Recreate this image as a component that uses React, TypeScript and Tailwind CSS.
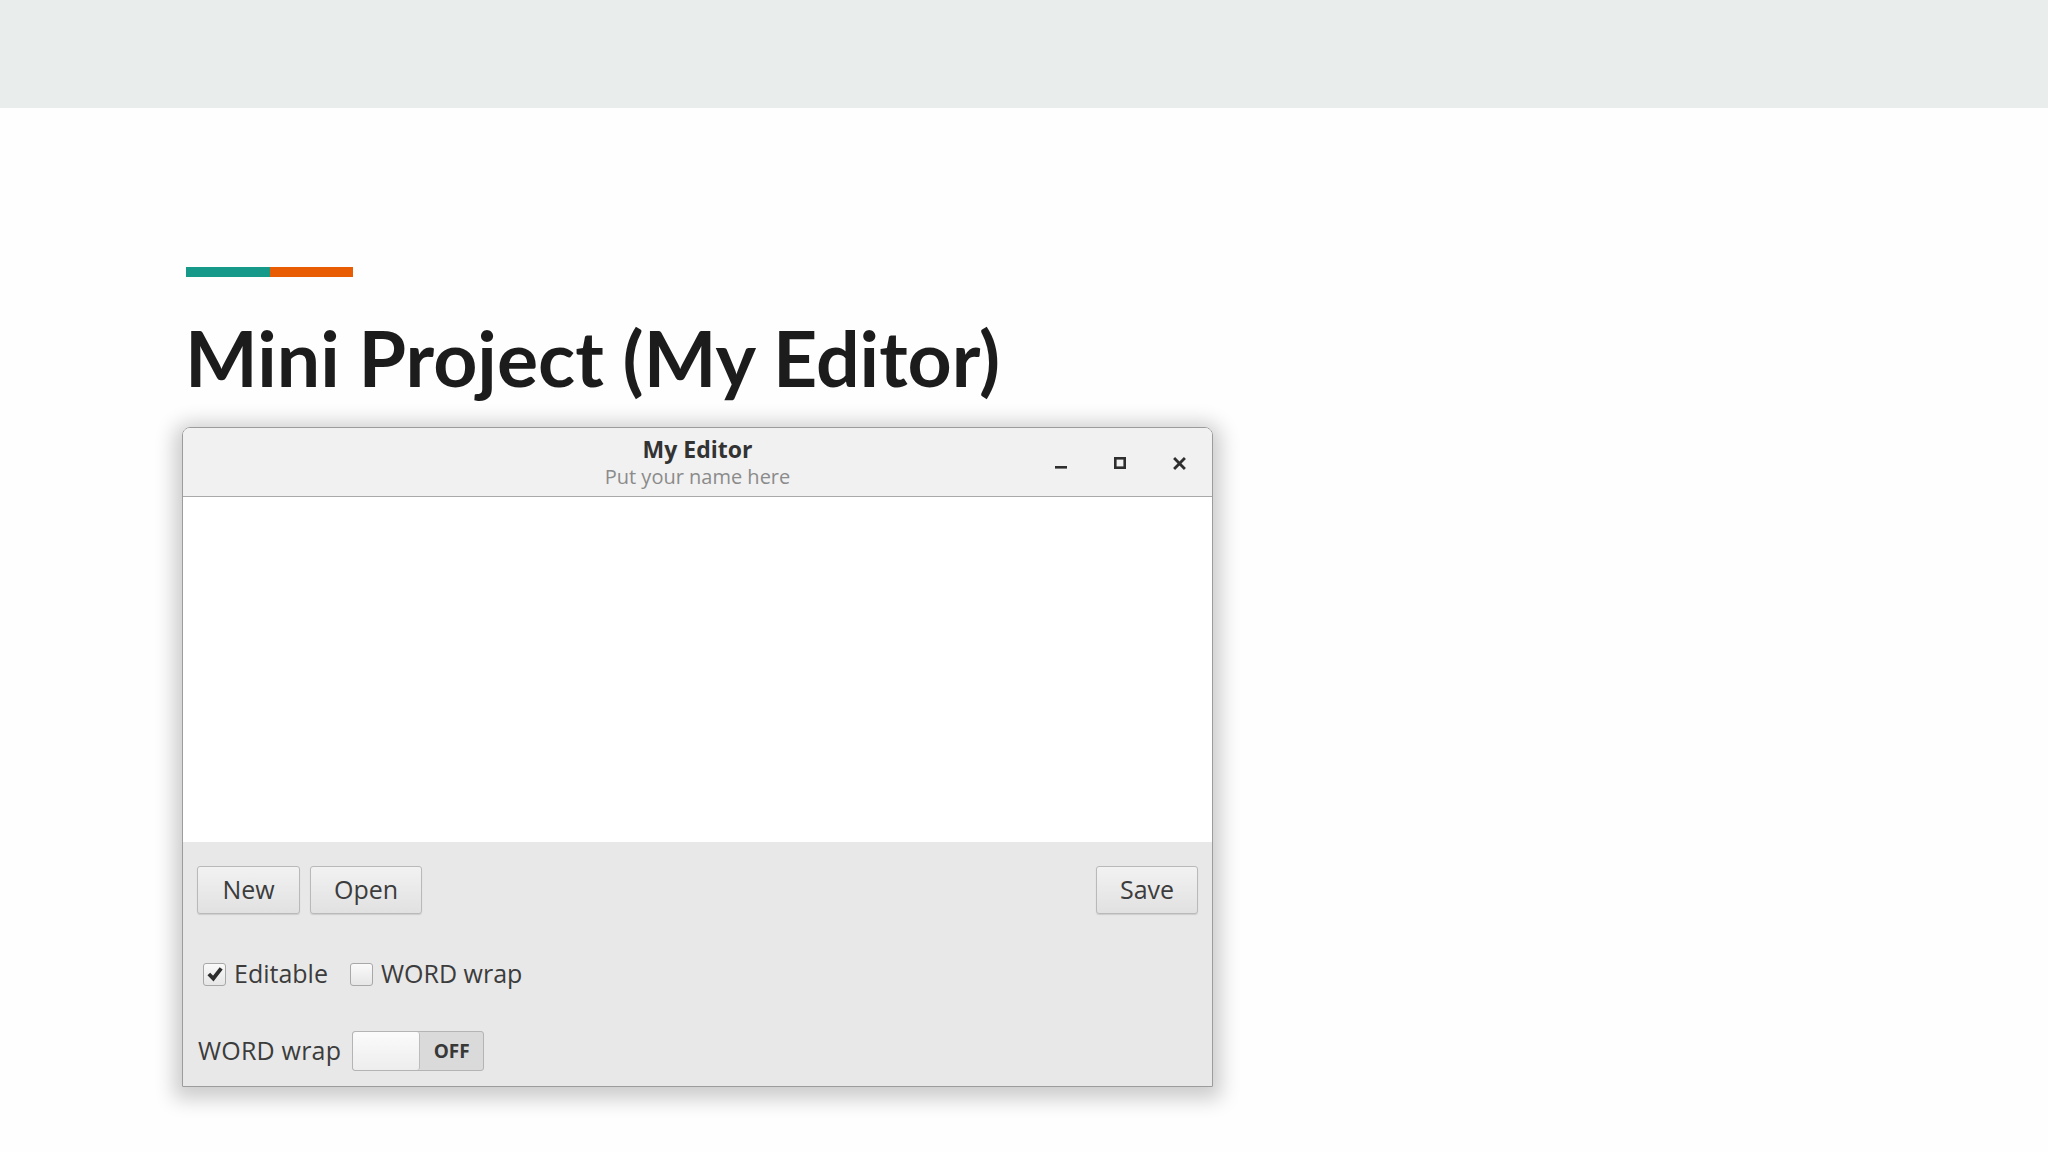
export default function App() {
  return (
    <div className="w-[2048px] h-[1152px] bg-[#fefefe] overflow-hidden" style={{ fontFamily: '"Open Sans", sans-serif' }}>
      <div className="h-[108px] bg-[#e9eeec]" />

      <div className="pl-[182px] pt-[159px]">
        <div className="ml-[4px] flex h-[10px]">
          <div className="w-[84px] bg-[#17998a]" />
          <div className="w-[83px] bg-[#e85d04]" />
        </div>

        <h1
          className="ml-[3px] mt-[42px] text-[77px] leading-none font-bold text-[#1c1c1c]"
          style={{ fontFamily: 'Lato, sans-serif' }}
        >
          Mini Project (My Editor)
        </h1>

        <EditorWindow />
      </div>
    </div>
  );
}

function EditorWindow() {
  return (
    <div className="mt-[31px] w-[1031px] h-[660px] flex flex-col border border-[#9c9c9c] rounded-t-[8px] shadow-[0_4px_20px_8px_rgba(0,0,0,0.2)] overflow-hidden">
      {/* header bar */}
      <div className="relative h-[69px] shrink-0 bg-[#f1f1f1] border-b border-[#a9a9a9] flex flex-col items-center pt-[7px]">
        <div className="text-[23px] leading-[28px] font-bold text-[#333]">My Editor</div>
        <div className="text-[20px] leading-[27px] text-[#8b8b8b]">Put your name here</div>

        <div className="absolute right-[26px] top-[28px] flex items-center gap-[47px] text-[#2e2e2e]">
          <svg width="12" height="14" viewBox="0 0 12 14">
            <rect x="0" y="10" width="12" height="2.6" fill="currentColor" />
          </svg>
          <svg width="12" height="12" viewBox="0 0 12 12">
            <rect x="1.3" y="1.3" width="9.4" height="9.4" fill="none" stroke="currentColor" strokeWidth="2.6" />
          </svg>
          <svg width="13" height="13" viewBox="0 0 12 12">
            <path d="M1 1 L11 11 M11 1 L1 11" stroke="currentColor" strokeWidth="2.6" />
          </svg>
        </div>
      </div>

      {/* text area */}
      <div className="h-[345px] shrink-0 bg-white" />

      {/* controls */}
      <div className="flex-1 bg-[#e8e8e8] px-[14px] pt-[24px] text-[25px] text-[#3c3c3c]">
        <div className="flex items-center gap-[10px]">
          <Button label="New" width="w-[103px]" />
          <Button label="Open" width="w-[112px]" />
          <div className="flex-1" />
          <Button label="Save" width="w-[102px]" />
        </div>

        <div className="mt-[40px] h-[40px] flex items-center">
          <Checkbox checked label="Editable" />
          <div className="w-[16px]" />
          <Checkbox label="WORD wrap" />
        </div>

        <div className="mt-[37px] h-[40px] flex items-center gap-[11px]">
          <span className="ml-[1px] tracking-[0.2px]">WORD wrap</span>
          <div className="w-[132px] h-[40px] flex border border-[#b4b4b4] rounded-[3px] bg-[#dadada] overflow-hidden">
            <div className="w-[67px] bg-gradient-to-b from-[#fbfbfb] to-[#ededed] border-r border-[#bcbcbc] rounded-[3px]" />
            <div className="flex-1 flex items-center justify-center text-[19px] font-bold text-[#383838]">OFF</div>
          </div>
        </div>
      </div>
    </div>
  );
}

function Button({ label, width }: { label: string; width: string }) {
  return (
    <button
      className={`${width} h-[48px] flex items-center justify-center rounded-[3px] border border-[#b9b9b9] bg-gradient-to-b from-[#f2f2f2] to-[#e1e1e1] shadow-[0_1px_1px_rgba(0,0,0,0.12)] text-[25px] text-[#3c3c3c]`}
    >
      {label}
    </button>
  );
}

function Checkbox({ checked, label }: { checked?: boolean; label: string }) {
  return (
    <div className="flex items-center gap-[8px]">
      <div className="ml-[6px] w-[23px] h-[23px] rounded-[3px] border border-[#a8a8a8] bg-gradient-to-b from-[#fafafa] to-[#e6e6e6] flex items-center justify-center">
        {checked && (
          <svg width="18" height="18" viewBox="0 0 16 16">
            <path d="M2.5 8 L6.5 12 L13.5 3" fill="none" stroke="#2d2d2d" strokeWidth="3.4" strokeLinejoin="miter" />
          </svg>
        )}
      </div>
      <span>{label}</span>
    </div>
  );
}
